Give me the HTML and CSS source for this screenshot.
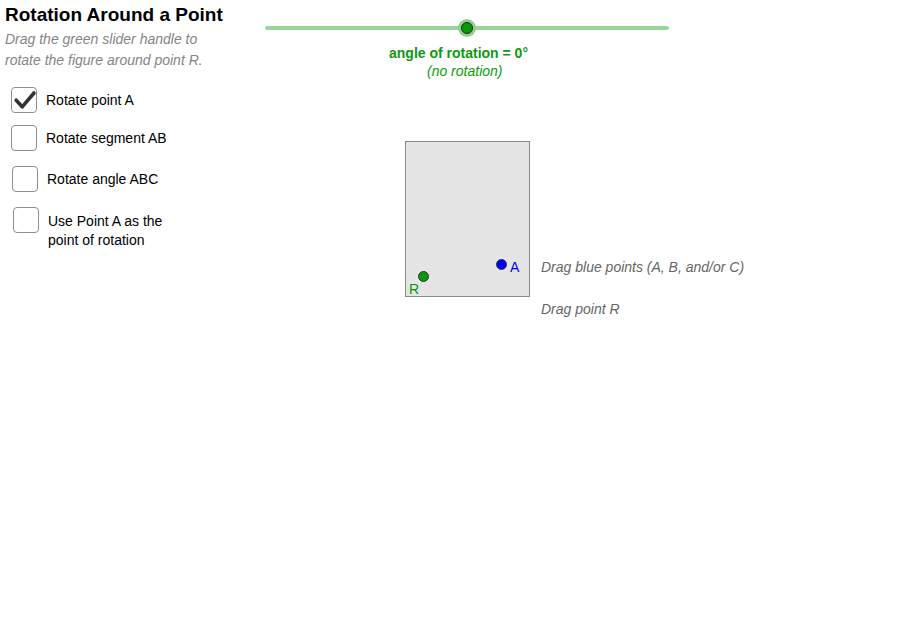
FILE: index.html
```html
<!DOCTYPE html>
<html>
<head>
<meta charset="utf-8">
<link rel="stylesheet" href="styles.css">
</head>
<body>
<div class="applet">
  <div class="panel">
    <h1 class="title">Rotation Around a Point</h1>
    <p class="hint">Drag the green slider handle to<br>rotate the figure around point R.</p>
    <div class="options">
      <label class="option option-1">
        <span class="box">
          <svg width="26" height="26" viewBox="0 0 26 26"><path d="M5.2 13.2 L11.2 19.8 L23 6" fill="none" stroke="#333" stroke-width="3.6" stroke-linecap="round" stroke-linejoin="round"/></svg>
        </span>
        <span class="text">Rotate point A</span>
      </label>
      <label class="option option-2">
        <span class="box"></span>
        <span class="text">Rotate segment AB</span>
      </label>
      <label class="option option-3">
        <span class="box"></span>
        <span class="text">Rotate angle ABC</span>
      </label>
      <label class="option option-4 multi">
        <span class="box"></span>
        <span class="text">Use Point A as the<br>point of rotation</span>
      </label>
    </div>
  </div>
  <div class="canvas">
    <div class="slider-track"></div>
    <div class="slider-halo"></div>
    <div class="slider-knob"></div>
    <div class="slider-label">angle of rotation = 0°</div>
    <div class="slider-note">(no rotation)</div>
    <div class="figure">
      <span class="pt pt-a"></span>
      <span class="pt-label label-a">A</span>
      <span class="pt pt-r"></span>
      <span class="pt-label label-r">R</span>
    </div>
    <div class="note note-blue">Drag blue points (A, B, and/or C)</div>
    <div class="note note-r">Drag point R</div>
  </div>
</div>
</body>
</html>
```
FILE: styles.css
```css
html, body {
  margin: 0;
  padding: 0;
  background: #fff;
}
body {
  font-family: "Liberation Sans", Arial, sans-serif;
  font-size: 14px;
  color: #000;
}
.applet {
  display: flex;
  width: 900px;
  height: 620px;
}
.panel {
  width: 250px;
  flex: none;
  padding-left: 5px;
  box-sizing: border-box;
}
.title {
  margin: 0;
  padding-top: 4px;
  font-size: 19px;
  line-height: 22px;
  font-weight: bold;
}
.hint {
  margin: 3px 0 0 0;
  font-size: 14px;
  line-height: 21px;
  font-style: italic;
  color: #858585;
}
.options {
  display: flex;
  flex-direction: column;
  margin-top: 16px;
}
.option {
  display: flex;
  align-items: center;
  gap: 9px;
}
.option-1 { margin-left: 6px; }
.option-2 { margin-left: 6px; margin-top: 12px; }
.option-3 { margin-left: 7px; margin-top: 15px; }
.option-4 { margin-left: 8px; margin-top: 15px; }
.multi { align-items: flex-start; }
.box {
  width: 26px;
  height: 26px;
  box-sizing: border-box;
  border: 1px solid #8f8f8f;
  border-radius: 4px;
  background: #fff;
  position: relative;
  flex: none;
}
.box svg {
  position: absolute;
  left: -1px;
  top: -1px;
}
.text {
  line-height: 19px;
}
.multi .text {
  margin-top: 4.5px;
}
.canvas {
  position: relative;
  flex: 1;
  height: 620px;
}
.slider-track {
  position: absolute;
  left: 15px;
  top: 26px;
  width: 404px;
  height: 4px;
  border-radius: 2px;
  background: #9ad69a;
}
.slider-halo {
  position: absolute;
  left: 208px;
  top: 19px;
  width: 18px;
  height: 18px;
  border-radius: 50%;
  background: #8fd08f;
}
.slider-knob {
  position: absolute;
  left: 211px;
  top: 22px;
  width: 12px;
  height: 12px;
  box-sizing: border-box;
  border-radius: 50%;
  background: #079907;
  border: 1.5px solid #222;
}
.slider-label {
  position: absolute;
  left: 139px;
  top: 45px;
  line-height: 16px;
  font-weight: bold;
  color: #0f990f;
  white-space: nowrap;
}
.slider-note {
  position: absolute;
  left: 177px;
  top: 63px;
  line-height: 16px;
  font-style: italic;
  color: #0f990f;
  white-space: nowrap;
}
.figure {
  position: absolute;
  left: 155px;
  top: 141px;
  width: 125px;
  height: 156px;
  box-sizing: border-box;
  border: 1px solid #8a8a8a;
  background: #e5e5e5;
}
.pt {
  position: absolute;
  width: 11px;
  height: 11px;
  box-sizing: border-box;
  border-radius: 50%;
  border: 1px solid #333;
}
.pt-a {
  left: 89.5px;
  top: 116.5px;
  background: #0000ff;
}
.pt-r {
  left: 11.5px;
  top: 128.5px;
  background: #079907;
}
.pt-label {
  position: absolute;
  line-height: 16px;
  font-size: 14px;
}
.label-a {
  left: 104px;
  top: 117px;
  color: #0000ff;
}
.label-r {
  left: 3px;
  top: 139px;
  color: #079907;
}
.note {
  position: absolute;
  left: 291px;
  line-height: 16px;
  font-style: italic;
  color: #666;
  white-space: nowrap;
}
.note-blue { top: 259px; }
.note-r { top: 301px; }
```
